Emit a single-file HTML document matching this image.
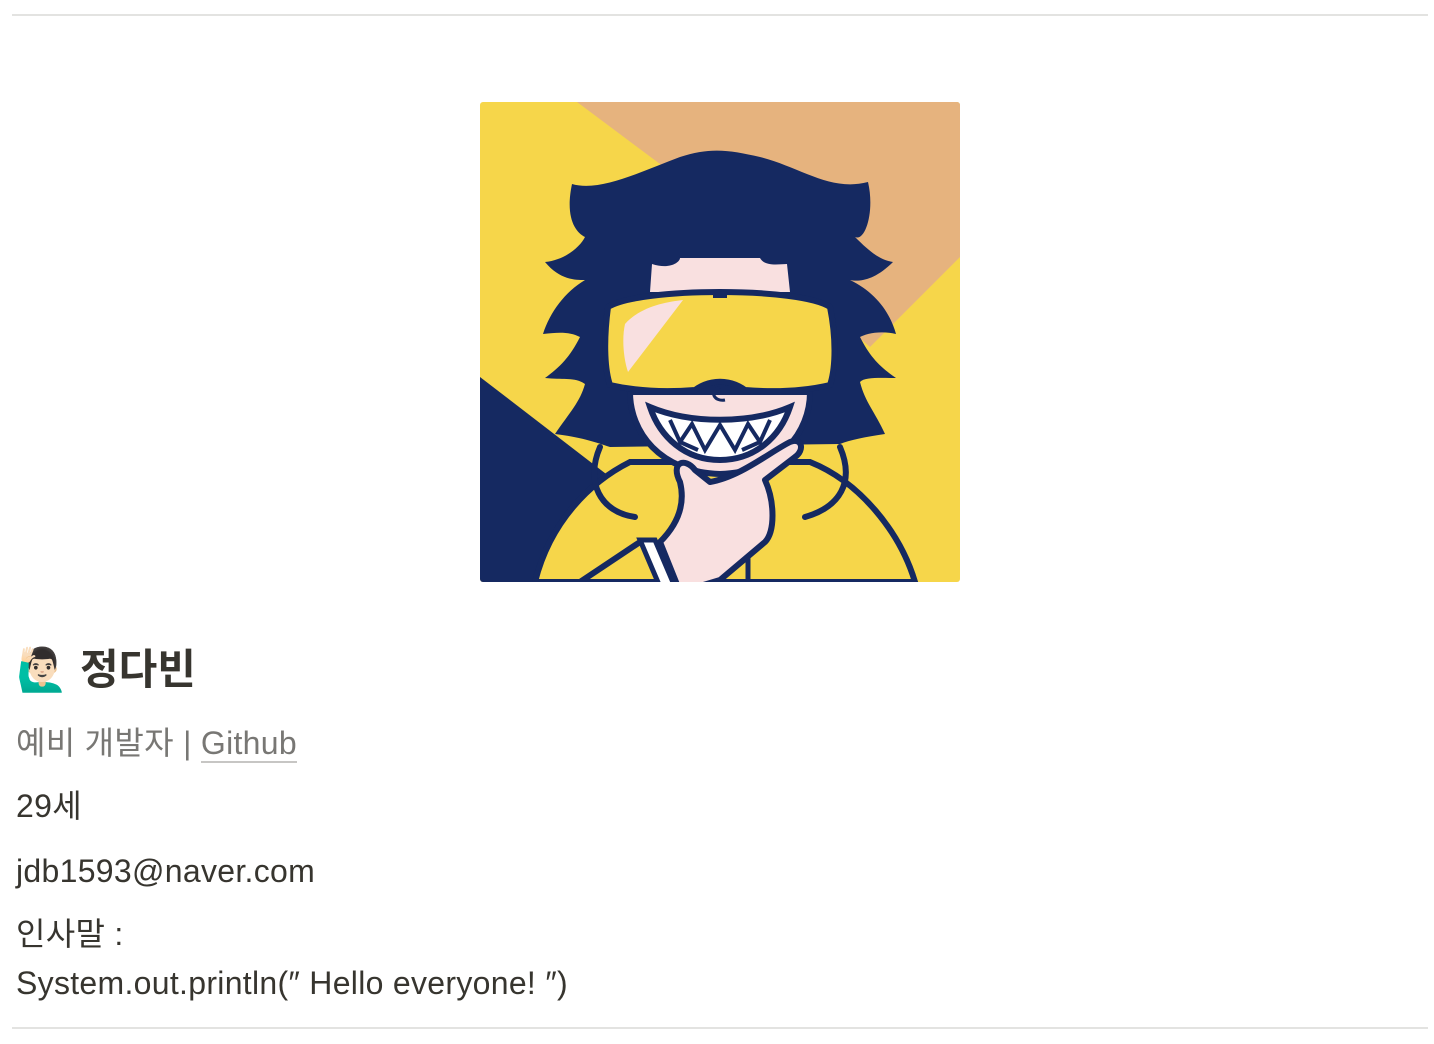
<!DOCTYPE html>
<html><head><meta charset="utf-8"><style>
body{margin:0;width:1434px;height:1044px;background:#fff;position:relative;overflow:hidden;font-family:"Liberation Sans","Noto Sans CJK KR",sans-serif;color:#37352f}
.hr{position:absolute;left:12px;width:1416px;height:2px;background:#e3e3e1}
.t{position:absolute;left:16px;white-space:nowrap;font-size:32px;line-height:36px;letter-spacing:0.3px}
</style></head><body>
<div class="hr" style="top:14px"></div>
<div class="hr" style="top:1027px"></div>
<svg style="position:absolute;left:480px;top:102px" width="480" height="480" viewBox="0 0 480 480">
<defs><clipPath id="c"><rect width="480" height="480" rx="3"/></clipPath></defs>
<g clip-path="url(#c)">
<rect width="480" height="480" fill="#F6D64A"/>
<polygon points="97,0 480,0 480,155 390,245 180,62" fill="#E6B37E"/>
<polygon points="0,275 130,375 60,480 0,480" fill="#152961"/>
<path d="M55,480 C70,420 110,380 150,360 L330,360 C380,380 420,430 435,480 Z" fill="#F6D64A" stroke="#152961" stroke-width="6"/>
<path d="M92,82 C120,90 160,70 200,55 C230,45 250,48 280,55 C320,65 350,90 388,80 C395,110 385,140 375,135 C390,150 400,158 413,160 C395,178 380,180 370,178 C395,190 410,210 416,232 C400,228 385,232 380,235 C390,255 400,265 416,276 C398,276 385,275 380,280 C385,300 395,310 405,332 C385,335 370,338 360,342 L130,345 C115,340 100,335 75,332 C90,310 100,300 105,282 C95,275 85,278 65,276 C80,265 90,255 100,235 C90,230 80,230 63,232 C70,210 85,190 105,178 C95,178 80,178 65,160 C85,158 100,145 105,135 C95,130 85,115 92,82 Z" fill="#152961"/>
<path d="M120,345 C105,380 120,410 155,415" fill="none" stroke="#152961" stroke-width="6" stroke-linecap="round"/>
<path d="M360,345 C375,380 360,405 325,415" fill="none" stroke="#152961" stroke-width="6" stroke-linecap="round"/>
<path d="M172,162 C190,168 200,160 200,156 L280,156 C285,165 300,162 307,162 L310,190 L170,190 Z" fill="#F9E0E0"/>
<path d="M150,290 L330,290 C330,330 300,370 240,372 C180,370 150,330 150,290 Z" fill="#F9E0E0" stroke="#152961" stroke-width="6"/>
<path d="M128,205 C160,185 320,185 350,205 C356,235 356,265 350,283 C320,290 290,290 265,288 C250,277 230,277 215,288 C190,290 160,290 130,283 C124,265 124,235 128,205 Z" fill="#F6D64A" stroke="#152961" stroke-width="6"/>
<path d="M145,222 C160,205 185,200 203,198 L148,270 C143,255 142,235 145,222 Z" fill="#F9E0E0"/>
<rect x="233" y="191" width="14" height="5" fill="#152961"/>
<path d="M240,285 C228,290 235,300 245,298" fill="none" stroke="#152961" stroke-width="3"/>
<path d="M170,305 C210,322 270,322 310,305 C300,335 275,358 240,358 C205,358 180,335 170,305 Z" fill="#fff" stroke="#152961" stroke-width="6"/>
<path d="M190,318 L200,340 L212,322 L225,348 L240,323 L255,348 L268,322 L280,340 L290,318 M200,340 L218,348 M262,348 L280,340" fill="none" stroke="#152961" stroke-width="4"/>
<path d="M200,380 C190,360 205,355 215,368 L230,380 C260,375 290,350 310,340 C322,335 325,348 315,355 L285,378 C295,400 295,430 285,440 L240,478 L200,490 L180,440 C200,420 205,400 200,380 Z" fill="#F9E0E0" stroke="#152961" stroke-width="6" stroke-linejoin="round"/>
<path d="M160,438 L175,438 L195,485 L180,485 Z" fill="#fff" stroke="#152961" stroke-width="5"/>
<path d="M100,480 L160,440" stroke="#152961" stroke-width="6"/>
<path d="M268,455 L268,480" stroke="#152961" stroke-width="5"/>
</g></svg>
<div class="t" style="top:644px;font-size:42px;line-height:52px;font-weight:bold;left:16px;letter-spacing:0">🙋🏻‍♂️ 정다빈</div>
<div class="t" style="top:725px;color:#787774">예비 개발자 | <span style="border-bottom:2px solid #c7c6c4">Github</span></div>
<div class="t" style="top:788px">29세</div>
<div class="t" style="top:853px">jdb1593@naver.com</div>
<div class="t" style="top:916px">인사말 :</div>
<div class="t" style="top:965px">System.out.println(″ Hello everyone! ″)</div>
</body></html>
